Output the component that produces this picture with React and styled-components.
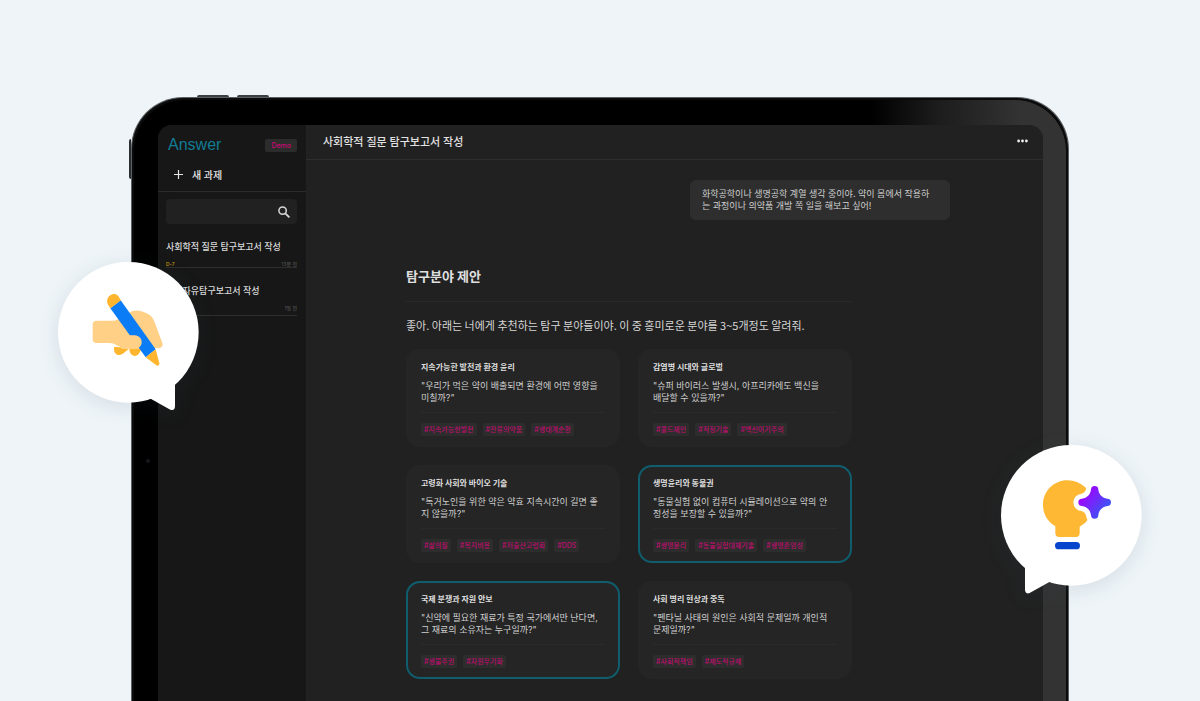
import React, { useState } from 'react';
import styled, { createGlobalStyle } from 'styled-components';

const GlobalStyle = createGlobalStyle`
  * {
    box-sizing: border-box;
  }

  body {
    margin: 0;
    background: #eef4f8;
    font-family: Inter, 'Noto Sans CJK KR', sans-serif;
  }

  button,
  input {
    font-family: inherit;
  }
`;

const Page = styled.div`
  position: relative;
  display: flex;
  min-height: 100vh;
  padding: 97px 131px 0;
  overflow: hidden;
`;

const Tablet = styled.div`
  position: relative;
  display: flex;
  flex: 1;
  min-width: 0;
  padding: 27px 25px 0 26px;
  border: 1px solid #5c6063;
  border-bottom: 0;
  border-radius: 52px 52px 0 0;
  background: linear-gradient(90deg, #000 79%, #1c1c1c 86%, #333 95%);
  box-shadow: inset 2px 2px 0 #0b0b0b, inset -2px 2px 0 #0b0b0b;
`;

const SideKey = styled.span`
  position: absolute;
  top: 41px;
  left: -3px;
  width: 2px;
  height: 40px;
  border-radius: 2px 0 0 2px;
  background: #2b2e30;
`;

const TopKey = styled.span`
  position: absolute;
  top: -3px;
  left: ${props => props.$left};
  width: 32px;
  height: 2px;
  border-radius: 2px 2px 0 0;
  background: #3c4043;
`;

const Camera = styled.span`
  position: absolute;
  top: 361px;
  left: 14px;
  width: 4px;
  height: 4px;
  border-radius: 50%;
  background: #15171c;
`;

const Screen = styled.div`
  display: flex;
  flex: 1;
  min-width: 0;
  border-radius: 14px 14px 0 0;
  background: #212121;
  overflow: hidden;
`;

const Sidebar = styled.aside`
  flex: 0 0 148px;
  min-width: 0;
  background: #171717;
`;

const Brand = styled.div`
  display: flex;
  align-items: center;
  justify-content: space-between;
  padding: 10px 9px 0 10px;
`;

const Logo = styled.h1`
  margin: 0;
  color: #127c95;
  font-family: 'Liberation Sans', sans-serif;
  font-size: 16px;
  font-weight: 400;
  line-height: 20px;
`;

const Demo = styled.span`
  padding: 0 6px;
  border-radius: 2px;
  background: #2c2c2c;
  color: #c80a74;
  font-size: 7px;
  font-weight: 500;
  line-height: 13px;
`;

const NewTask = styled.button`
  display: flex;
  align-items: center;
  gap: 9px;
  width: 100%;
  height: 37px;
  padding: 2px 16px 0;
  border: 0;
  border-bottom: 1px solid #2c2c2c;
  background: none;
  color: #e6e6e6;
  font-size: 10px;
  font-weight: 500;
`;

const Search = styled.label`
  display: flex;
  align-items: center;
  height: 25px;
  margin: 7px 9px 0 8px;
  padding-right: 7px;
  border-radius: 4px;
  background: #212121;
`;

const SearchInput = styled.input`
  flex: 1;
  width: 100%;
  min-width: 0;
  padding: 0 8px;
  border: 0;
  outline: 0;
  background: none;
  color: #e6e6e6;
  font-size: 9px;
`;

const TaskList = styled.nav`
  padding: 0 9px 0 8px;
`;

const Task = styled.a`
  display: block;
  padding: 17px 0 ${props => (props.$due ? '0' : '4px')};
  border-bottom: 1px solid #2e2e2e;
  color: #dadada;
  font-size: 9px;
  font-weight: 500;
  line-height: 12px;
  text-decoration: none;
  white-space: nowrap;
`;

const TaskMeta = styled.span`
  display: flex;
  justify-content: space-between;
  margin-top: 8px;
  color: #4e4e4e;
  font-size: 5px;
  line-height: 6px;
`;

const Due = styled.span`
  color: #c79a10;
`;

const Main = styled.main`
  flex: 1;
  min-width: 0;
  color: #d6d6d6;
`;

const TopBar = styled.header`
  display: flex;
  align-items: center;
  justify-content: space-between;
  height: 35px;
  padding: 0 15px 2px 17px;
  border-bottom: 1px solid #2e2e2e;
`;

const TopTitle = styled.h2`
  margin: 0;
  color: #e2e2e2;
  font-size: 11px;
  font-weight: 500;
`;

const MoreButton = styled.button`
  display: flex;
  padding: 0;
  border: 0;
  background: none;
`;

const Conversation = styled.div`
  padding: 20px 93px 22px 100px;
`;

const Message = styled.p`
  width: fit-content;
  min-width: 260px;
  margin: 0 0 0 auto;
  padding: 8px 12px;
  border-radius: 6px;
  background: #2e2e2e;
  color: #cfcfcf;
  font-size: 9px;
  line-height: 12px;
  white-space: pre-line;
`;

const Answer = styled.section`
  max-width: 446px;
  margin-top: 46px;
`;

const AnswerTitle = styled.h3`
  margin: 0;
  padding-bottom: 15px;
  border-bottom: 1px solid #292929;
  color: #e0e0e0;
  font-size: 13px;
  font-weight: 700;
  line-height: 20px;
`;

const AnswerText = styled.p`
  margin: 15px 0 16px;
  font-family: 'Noto Sans CJK KR', sans-serif;
  font-size: 11px;
  line-height: 16px;
`;

const Cards = styled.div`
  display: grid;
  grid-template-columns: repeat(2, 1fr);
  gap: 18px;
`;

const Card = styled.button`
  display: block;
  padding: 10px 13px 9px;
  border: 2px solid ${props => (props.$active ? '#0f5d6d' : '#252525')};
  border-radius: 14px;
  background: #252525;
  color: #cfcfcf;
  text-align: left;
`;

const CardTitle = styled.strong`
  display: block;
  color: #dedede;
  font-family: 'Noto Sans CJK KR', sans-serif;
  font-size: 8px;
  font-weight: 700;
  line-height: 12px;
`;

const Question = styled.span`
  display: block;
  margin-top: 7px;
  padding-bottom: 8px;
  border-bottom: 1px solid #2a2a2a;
  font-size: 9px;
  line-height: 12px;
  white-space: pre-line;
`;

const Tags = styled.span`
  display: flex;
  gap: 6px;
  margin-top: 10px;
`;

const Tag = styled.span`
  padding: 0 3px;
  border-radius: 2px;
  background: #2d2d2d;
  color: #bd0e6e;
  font-size: 7px;
  font-weight: 500;
  line-height: 13px;
  white-space: nowrap;
`;

const Balloon = styled.svg`
  position: absolute;
  top: ${props => props.$top};
  left: ${props => props.$left};
  right: ${props => props.$right};
  width: 141px;
  height: 148px;
  overflow: visible;
  filter: drop-shadow(0 4px 10px rgba(40, 70, 90, 0.12));
`;

const tasks = [
  { title: '사회학적 질문 탐구보고서 작성', due: 'D-7', time: '13분 전' },
  { title: '과학자유탐구보고서 작성', time: '1일 전' },
];

const topics = [
  {
    title: '지속가능한 발전과 환경 윤리',
    question: '"우리가 먹은 약이 배출되면 환경에 어떤 영향을\n미칠까?"',
    tags: ['#지속가능한발전', '#잔류의약품', '#생태계순환'],
  },
  {
    title: '감염병 시대와 글로벌',
    question: '"슈퍼 바이러스 발생시, 아프리카에도 백신을\n배달할 수 있을까?"',
    tags: ['#콜드체인', '#적정기술', '#백신이기주의'],
  },
  {
    title: '고령화 사회와 바이오 기술',
    question: '"독거노인을 위한 약은 약효 지속시간이 길면 좋\n지 않을까?"',
    tags: ['#삶의질', '#복지비용', '#저출산고령화', '#DDS'],
  },
  {
    title: '생명윤리와 동물권',
    question: '"동물실험 없이 컴퓨터 시뮬레이션으로 약의 안\n정성을 보장할 수 있을까?"',
    tags: ['#생명윤리', '#동물실험대체기술', '#생명존엄성'],
  },
  {
    title: '국제 분쟁과 자원 안보',
    question: '"신약에 필요한 재료가 특정 국가에서만 난다면,\n그 재료의 소유자는 누구일까?"',
    tags: ['#생물주권', '#자원무기화'],
  },
  {
    title: '사회 병리 현상과 중독',
    question: '"펜타닐 사태의 원인은 사회적 문제일까 개인적\n문제일까?"',
    tags: ['#사회적책임', '#제도적규제'],
  },
];

const PlusIcon = () => (
  <svg width="9" height="9" viewBox="0 0 9 9" stroke="#e6e6e6" strokeWidth="1.2">
    <path d="M4.5 0v9M0 4.5h9" />
  </svg>
);

const SearchIcon = () => (
  <svg width="12" height="12" viewBox="0 0 12 12" fill="none" stroke="#d8d8d8" strokeWidth="1.5">
    <circle cx="4.6" cy="4.6" r="3.7" />
    <path d="M7.3 7.3l4.1 4.1" strokeWidth="1.8" />
  </svg>
);

const MoreIcon = () => (
  <svg width="11" height="4" viewBox="0 0 11 4" fill="#f0f0f0">
    <circle cx="1.6" cy="2" r="1.4" />
    <circle cx="5.5" cy="2" r="1.4" />
    <circle cx="9.4" cy="2" r="1.4" />
  </svg>
);

const WritingBalloon = () => (
  <Balloon $top="262px" $left="58px" viewBox="0 0 141 148" aria-hidden="true">
    <g transform="translate(-8 -12) scale(0.33333)">
      <circle cx="235" cy="247" r="211" fill="#fff" />
      <path d="M375 395V468Q375 483 361 479L298 444Z" fill="#fff" />
      <path d="M193 290C189 304 197 315 208 315C218 315 226 305 238 295Z" fill="#ffb52e" />
      <path d="M238 292C237 309 245 318 255 318C264 317 270 308 274 296Z" fill="#ffb52e" />
      <path
        d="M140 212H184C200 212 207 207 219 200L246 184C260 178 275 183 290 190C303 195 309 204 314 217L337 279C341 290 330 297 320 294L262 296C236 298 213 293 203 287C193 281 187 279 178 279H140Q128 279 128 267V224Q128 212 140 212Z"
        fill="#ffd085"
      />
      <path d="M181 175L212 151L317 298L287 322Z" fill="#0a7cf5" />
      <path d="M181 175L174 164C167 150 175 137 187 133C197 130 205 136 210 147L213 151Z" fill="#ffb52e" />
      <path d="M287 322L317 298L328 340Q328 350 319 346Z" fill="#ffb52e" />
      <path d="M200 256H254C268 257 276 267 275 279C273 290 264 297 252 297H216Z" fill="#ffd085" />
    </g>
  </Balloon>
);

const IdeaBalloon = () => {
  const star =
    'M333 179A11 11 0 0 1 355 179C358 195 366 203 382 206A11 11 0 0 1 382 228C366 231 358 239 355 255A11 11 0 0 1 333 255C330 239 322 231 306 228A11 11 0 0 1 306 206C322 203 330 195 333 179Z';

  return (
    <Balloon $top="446px" $right="58px" viewBox="0 0 141 148" aria-hidden="true">
      <defs>
        <linearGradient id="spark" x1="0" y1="0.2" x2="0.9" y2="0.9">
          <stop offset="0.1" stopColor="#a400ff" />
          <stop offset="1" stopColor="#2b62f2" />
        </linearGradient>
      </defs>
      <g transform="translate(-21 -16) scale(0.33333)">
        <circle cx="274" cy="256" r="211" fill="#fff" />
        <path d="M135 404V478Q135 494 149 489L212 454Z" fill="#fff" />
        <path
          d="M262 151C284 151 303 160 318 174L330 225L322 271C316 279 308 285 299 290V309Q299 321 287 321H238Q226 321 226 309V288C203 276 189 252 189 224C189 183 222 151 262 151Z"
          fill="#ffb833"
        />
        <path d={star} fill="#fff" stroke="#fff" strokeWidth="30" strokeLinejoin="round" />
        <path d={star} fill="url(#spark)" />
        <rect x="225" y="336" width="75" height="22" rx="11" fill="#0646cc" />
      </g>
    </Balloon>
  );
};

const App = () => {
  const [selected, setSelected] = useState([3, 4]);

  const toggle = index =>
    setSelected(selected.includes(index) ? selected.filter(i => i !== index) : [...selected, index]);

  return (
    <Page>
      <GlobalStyle />
      <Tablet>
        <SideKey />
        <TopKey $left="65px" />
        <TopKey $left="105px" />
        <Camera />
        <Screen>
          <Sidebar>
            <Brand>
              <Logo>Answer</Logo>
              <Demo>Demo</Demo>
            </Brand>
            <NewTask type="button">
              <PlusIcon />
              새 과제
            </NewTask>
            <Search>
              <SearchInput type="text" aria-label="검색" />
              <SearchIcon />
            </Search>
            <TaskList>
              {tasks.map(task => (
                <Task key={task.title} href="#" $due={task.due}>
                  {task.title}
                  <TaskMeta>
                    <Due>{task.due}</Due>
                    <span>{task.time}</span>
                  </TaskMeta>
                </Task>
              ))}
            </TaskList>
          </Sidebar>
          <Main>
            <TopBar>
              <TopTitle>사회학적 질문 탐구보고서 작성</TopTitle>
              <MoreButton type="button" aria-label="더보기">
                <MoreIcon />
              </MoreButton>
            </TopBar>
            <Conversation>
              <Message>
                {'화학공학이나 생명공학 계열 생각 중이야. 약이 몸에서 작용하\n는 과정이나 의약품 개발 쪽 일을 해보고 싶어!'}
              </Message>
              <Answer>
                <AnswerTitle>탐구분야 제안</AnswerTitle>
                <AnswerText>
                  좋아. 아래는 너에게 추천하는 탐구 분야들이야. 이 중 흥미로운 분야를 3~5개정도 알려줘.
                </AnswerText>
                <Cards>
                  {topics.map((topic, index) => (
                    <Card
                      key={topic.title}
                      type="button"
                      aria-pressed={selected.includes(index)}
                      $active={selected.includes(index)}
                      onClick={() => toggle(index)}
                    >
                      <CardTitle>{topic.title}</CardTitle>
                      <Question>{topic.question}</Question>
                      <Tags>
                        {topic.tags.map(tag => (
                          <Tag key={tag}>{tag}</Tag>
                        ))}
                      </Tags>
                    </Card>
                  ))}
                </Cards>
              </Answer>
            </Conversation>
          </Main>
        </Screen>
      </Tablet>
      <WritingBalloon />
      <IdeaBalloon />
    </Page>
  );
};

export default App;
